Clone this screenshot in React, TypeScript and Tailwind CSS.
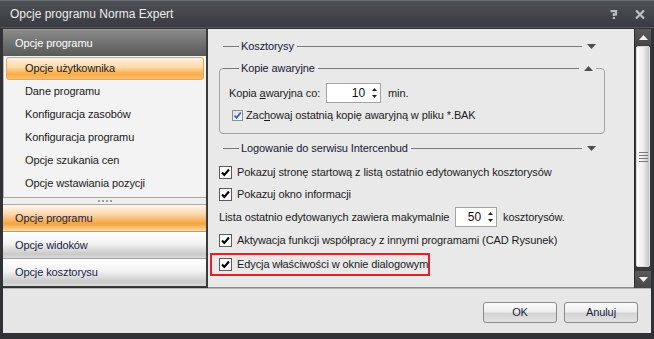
import React from 'react';

const PANEL_BG = 'bg-[#e9e9e9]';

const Triangle: React.FC<{ up?: boolean; color?: string }> = ({ up = false, color = '#4d4d4d' }) => (
  <svg width="9" height="5" viewBox="0 0 9 5" className="shrink-0">
    {up ? <path d="M0 5 L4.5 0 L9 5 Z" fill={color} /> : <path d="M0 0 L9 0 L4.5 5 Z" fill={color} />}
  </svg>
);

const BlackCheck: React.FC = () => (
  <div className="w-[13px] h-[13px] shrink-0 border border-[#5b5b5b] bg-white flex items-center justify-center">
    <svg width="11" height="11" viewBox="0 0 11 11">
      <path d="M2 5.5 L4.3 8 L9 2.5" fill="none" stroke="#000" strokeWidth="2.1" />
    </svg>
  </div>
);

const BlueCheck: React.FC = () => (
  <div className="w-[11px] h-[11px] shrink-0 border border-[#8e8f8f] bg-linear-to-br from-[#dcdcdc] to-[#ffffff] flex items-center justify-center">
    <svg width="9" height="9" viewBox="0 0 9 9">
      <path d="M1.5 4.5 L3.5 6.8 L7.8 1.5" fill="none" stroke="#2a64c4" strokeWidth="1.8" />
    </svg>
  </div>
);

const SpinBox: React.FC<{ value: string; width: string }> = ({ value, width }) => (
  <div className={`${width} h-[20px] shrink-0 bg-white border border-[#a3a3a3] flex items-center justify-end pr-[3px]`}>
    <span className="text-[12px] text-[#111]">{value}</span>
    <div className="flex flex-col items-center gap-[4px] ml-[7px]">
      <svg width="5" height="3" viewBox="0 0 5 3"><path d="M0 3 L2.5 0 L5 3 Z" fill="#222" /></svg>
      <svg width="5" height="3" viewBox="0 0 5 3"><path d="M0 0 L5 0 L2.5 3 Z" fill="#222" /></svg>
    </div>
  </div>
);

const SectionHeader: React.FC<{ title: string }> = ({ title }) => (
  <div className="flex items-center h-[16px] ml-[15px] mr-[38px]">
    <div className="w-[16px] h-px bg-[#7a7a7a]" />
    <span className="ml-[2px] mr-[3px] text-[#15183a] whitespace-nowrap">{title}</span>
    <div className="flex-1 h-px bg-[#7a7a7a]" />
    <span className="ml-[5px]"><Triangle /></span>
  </div>
);

const CheckRow: React.FC<{ label: string }> = ({ label }) => (
  <div className="flex items-center h-[22px] pl-[11px] gap-[5px]">
    <BlackCheck />
    <span className="text-[#1c1c1c] whitespace-nowrap">{label}</span>
  </div>
);

const navItems = [
  'Opcje użytkownika',
  'Dane programu',
  'Konfiguracja zasobów',
  'Konfiguracja programu',
  'Opcje szukania cen',
  'Opcje wstawiania pozycji',
];

const LeftPanel: React.FC = () => (
  <div className="w-[203px] flex flex-col">
    <div className="h-[27px] flex items-center pl-[12px] text-white border-t border-[#9a9a9a] bg-linear-to-b from-[#8a8a8a] to-[#595959]">
      Opcje programu
    </div>
    <div className="h-[141px] bg-[#f3f3f3] pt-px px-[2px] border-l border-[#b5b5b5]">
      {navItems.map((item, i) =>
        i === 0 ? (
          <div
            key={item}
            className="h-[23px] flex items-center pl-[18px] rounded-[3px] border border-[#eaa54d] bg-[linear-gradient(to_bottom,#fff1df_0%,#fdd9a6_45%,#f8ac48_75%,#f9bd6c_100%)] text-[#1a1a1a]"
          >
            {item}
          </div>
        ) : (
          <div key={item} className="h-[23px] flex items-center pl-[19px] text-[#1a1a1a]">
            {item}
          </div>
        )
      )}
    </div>
    <div className="h-[8px] bg-[#eeeeee] border-t border-b border-[#a8a8a8] flex items-center justify-center gap-[2px]">
      <span className="w-[2px] h-[2px] bg-[#a0a0a0]" />
      <span className="w-[2px] h-[2px] bg-[#a0a0a0]" />
      <span className="w-[2px] h-[2px] bg-[#a0a0a0]" />
      <span className="w-[2px] h-[2px] bg-[#a0a0a0]" />
    </div>
    <div className="h-[27px] flex items-center pl-[12px] text-[#1a2248] border-b border-[#a0a0a0] bg-[linear-gradient(to_bottom,#fff6ee_0%,#fcd7ac_35%,#f5a43b_72%,#fbd9a4_100%)]">
      Opcje programu
    </div>
    <div className="h-[27px] flex items-center pl-[12px] text-[#1a2248] border-b border-[#a0a0a0] bg-[linear-gradient(to_bottom,#ffffff_0%,#f3f3f3_45%,#c9c9c9_85%,#dcdcdc_100%)]">
      Opcje widoków
    </div>
    <div className="h-[27px] flex items-center pl-[12px] text-[#1a2248] bg-[linear-gradient(to_bottom,#ffffff_0%,#f3f3f3_45%,#c9c9c9_85%,#dcdcdc_100%)]">
      Opcje kosztorysu
    </div>
    <div className="h-px bg-[#3a3a3a]" />
  </div>
);

const RightPanel: React.FC = () => (
  <div className={`flex-1 ${PANEL_BG} flex flex-col pt-[9px] border-b border-[#8c8c8c]`}>
    <SectionHeader title="Kosztorysy" />

    <div className="mt-[14px] ml-[11px] mr-[29px] h-[66px] border border-[#a2a2a2] rounded-[4px] flex flex-col">
      <div className="flex items-center h-[15px] -mt-[8px] ml-[3px] mr-[8px]">
        <div className="w-[16px] h-px bg-[#7a7a7a]" />
        <span className={`${PANEL_BG} pl-[2px] pr-[3px] text-[#15183a]`}>Kopie awaryjne</span>
        <div className="flex-1 h-px bg-[#7a7a7a]" />
        <span className={`${PANEL_BG} pl-[5px] pr-[3px]`}><Triangle up /></span>
      </div>
      <div className="flex items-center h-[20px] mt-[7px] pl-[9px]">
        <span className="text-[#1c1c1c] w-[97px] whitespace-nowrap">
          Kopia <span className="underline">a</span>waryjna co:
        </span>
        <SpinBox value="10" width="w-[55px]" />
        <span className="ml-[7px] text-[#1c1c1c]">min.</span>
      </div>
      <div className="flex items-center h-[14px] mt-[5px] pl-[12px] gap-[3px]">
        <BlueCheck />
        <span className="text-[#1c1c1c] whitespace-nowrap">
          Zac<span className="underline">h</span>owaj ostatnią kopię awaryjną w pliku *.BAK
        </span>
      </div>
    </div>

    <div className="mt-[6px]">
      <SectionHeader title="Logowanie do serwisu Intercenbud" />
    </div>

    <div className="mt-[5px]">
      <CheckRow label="Pokazuj stronę startową z listą ostatnio edytowanych kosztorysów" />
      <CheckRow label="Pokazuj okno informacji" />
      <div className="flex items-center h-[24px] pl-[11px]">
        <span className="text-[#1c1c1c] w-[236px] whitespace-nowrap">Lista ostatnio edytowanych zawiera makymalnie</span>
        <SpinBox value="50" width="w-[42px]" />
        <span className="ml-[6px] text-[#1c1c1c]">kosztorysów.</span>
      </div>
      <CheckRow label="Aktywacja funkcji współpracy z innymi programami (CAD Rysunek)" />
      <div className="mt-[2px] ml-[2px] w-[220px] h-[23px] border-2 border-[#e3202b] flex items-center pl-[7px] gap-[5px]">
        <BlackCheck />
        <span className="text-[#1c1c1c] whitespace-nowrap">Edycja właściwości w oknie dialogowym</span>
      </div>
    </div>
  </div>
);

const Scrollbar: React.FC = () => (
  <div className="w-[17px] bg-[#3b3b3b] flex flex-col border-l border-[#2a2a2a]">
    <div className="h-[16px] bg-linear-to-b from-[#5a5a5a] to-[#464646] flex items-center justify-center">
      <Triangle up color="#f2f2f2" />
    </div>
    <div className="flex-1 flex flex-col pt-px pb-[4px]">
      <div className="flex-1 mx-px rounded-[2px] border border-[#dcdcdc] bg-linear-to-r from-[#ffffff] via-[#efefef] to-[#c4c4c4] flex items-center justify-center">
        <div className="flex flex-col gap-[2px]">
          <span className="w-[9px] h-px bg-[#7a7a7a]" />
          <span className="w-[9px] h-px bg-[#7a7a7a]" />
          <span className="w-[9px] h-px bg-[#7a7a7a]" />
          <span className="w-[9px] h-px bg-[#7a7a7a]" />
        </div>
      </div>
    </div>
    <div className="h-[17px] bg-linear-to-b from-[#5a5a5a] to-[#464646] flex items-center justify-center">
      <Triangle color="#f2f2f2" />
    </div>
  </div>
);

const DialogButton: React.FC<{ label: string }> = ({ label }) => (
  <button className="w-[74px] h-[21px] rounded-[3px] border border-[#8a8a8a] bg-[linear-gradient(to_bottom,#fbfbfb_0%,#eeeeee_45%,#d4d4d4_55%,#e2e2e2_100%)] text-[#1a2248] flex items-center justify-center">
    {label}
  </button>
);

export default function App() {
  return (
    <div className="w-[654px] h-[339px] bg-[#303236] flex flex-col text-[11px] tracking-[-0.1px] leading-none font-['Liberation_Sans',Arial,sans-serif]">
      <div className="h-[28px] shrink-0 flex items-center justify-between pl-[10px] pr-[9px] border-t border-[#686b70] bg-linear-to-b from-[#4d5055] to-[#393b40] border-b border-b-[#55585c]">
        <span className="text-[12px] tracking-normal text-[#ececec]">Opcje programu Norma Expert</span>
        <div className="flex items-center gap-[17px]">
          <svg width="8" height="9" viewBox="0 0 8 9">
            <path d="M0.5 1.2 H6 V4.3 H3.8 V6" fill="none" stroke="#b9bec6" strokeWidth="2.2" />
            <rect x="2.8" y="7" width="2.2" height="2" fill="#b9bec6" />
          </svg>
          <svg width="10" height="9" viewBox="0 0 10 9">
            <path d="M1 0.5 L9 8.5 M9 0.5 L1 8.5" stroke="#b9bec6" strokeWidth="2.3" />
          </svg>
        </div>
      </div>
      <div className="flex-1 flex flex-col px-[3px] pb-[6px] pt-px">
        <div className="h-[259px] flex">
          <LeftPanel />
          <div className="w-[2px] bg-[#3a3a3a]" />
          <RightPanel />
          <Scrollbar />
        </div>
        <div className="flex-1 bg-[#e6e6e6] border-t border-[#b4b4b4] flex justify-end items-start pt-[13px] pr-[13px] gap-[7px]">
          <DialogButton label="OK" />
          <DialogButton label="Anuluj" />
        </div>
      </div>
    </div>
  );
}
